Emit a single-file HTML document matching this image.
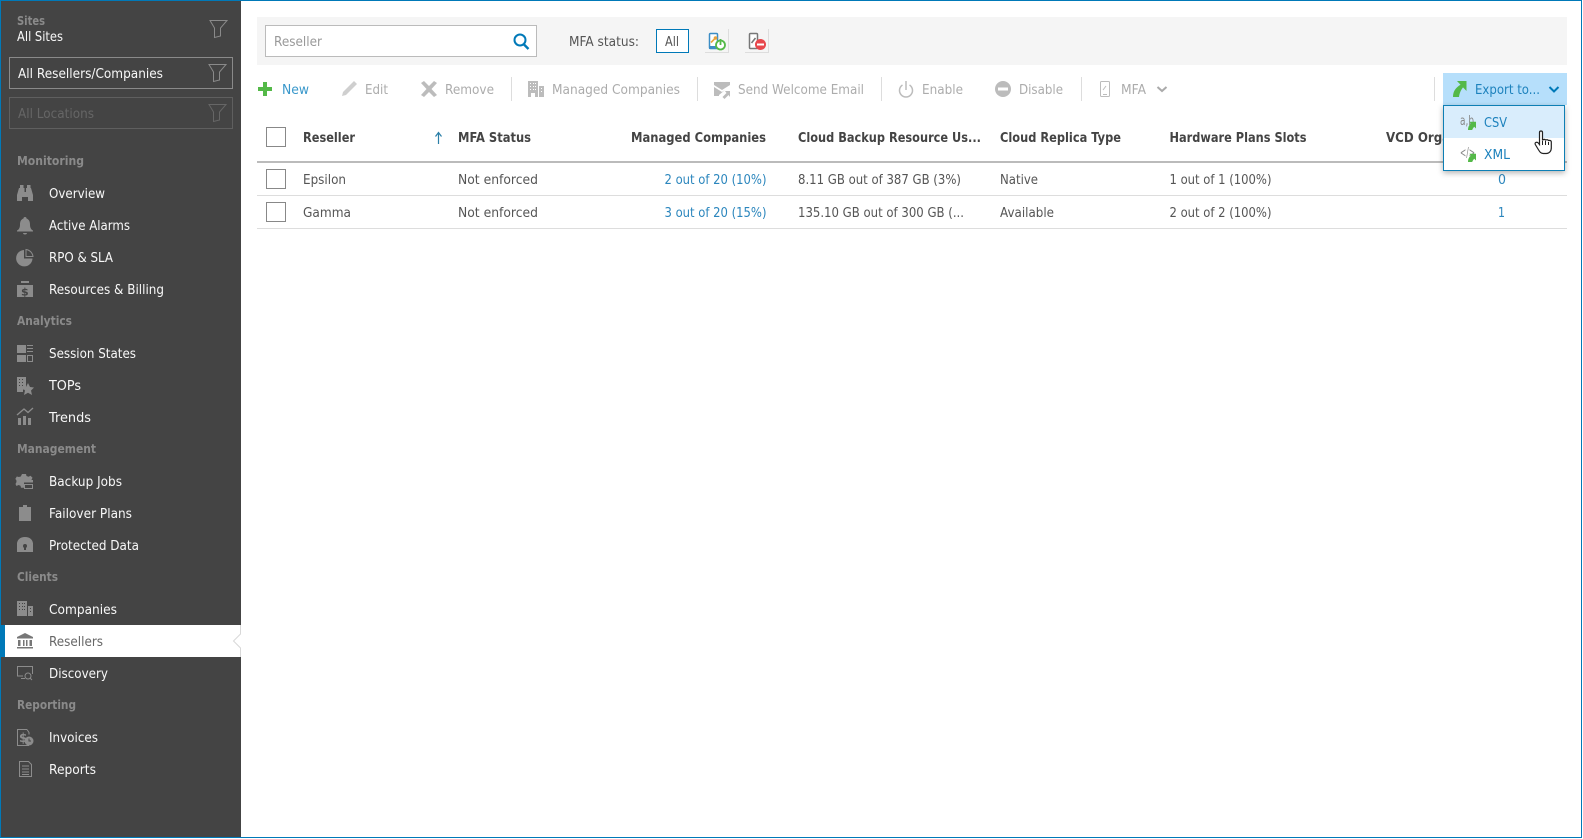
<!DOCTYPE html>
<html><head><meta charset="utf-8"><title>Resellers</title>
<style>
html,body{margin:0;padding:0;background:#fff;overflow:hidden}
svg{display:block}
text{font-family:"DejaVu Sans","Liberation Sans",sans-serif;font-size:13px}
.w{fill:#f8f8f8}
.s{fill:#8a8a8a;font-weight:bold;font-size:12px}
.g{fill:#acacac}
.d{fill:#555}
.h{fill:#444;font-weight:bold;font-size:13px}
.l{fill:#2b86bd}
.i{fill:#8c8c8c}
.ti{fill:#bcbcbc}
</style></head><body>
<svg xmlns="http://www.w3.org/2000/svg" width="1583" height="839" viewBox="0 0 1583 839">
<rect width="1583" height="839" fill="#fff"/>
<!-- sidebar -->
<rect x="0" y="0" width="241" height="838" fill="#444"/>
<rect x="0" y="0" width="1582" height="1" fill="#0079b8"/>
<rect x="0" y="0" width="1" height="838" fill="#0079b8"/>
<rect x="0" y="837" width="1582" height="1" fill="#0079b8"/>
<rect x="1581" y="0" width="1" height="838" fill="#0079b8"/>
<text x="17" y="25" class="s" textLength="28" lengthAdjust="spacingAndGlyphs">Sites</text>
<text x="17" y="41" class="w" textLength="46" lengthAdjust="spacingAndGlyphs">All Sites</text>
<path d="M210 20.500H227L220.500 28V36L214.500 37.500V28Z" fill="none" stroke="#8a8a8a"/>
<rect x="9.500" y="57.500" width="223" height="31" fill="none" stroke="#8a8a8a"/>
<text x="18" y="78" class="w" textLength="145" lengthAdjust="spacingAndGlyphs">All Resellers/Companies</text>
<path d="M209 64.500H226L219.500 72V80L213.500 81.500V72Z" fill="none" stroke="#8a8a8a"/>
<rect x="9.500" y="97.500" width="223" height="31" fill="none" stroke="#5f5f5f"/>
<text x="18" y="118" fill="#666" textLength="76" lengthAdjust="spacingAndGlyphs">All Locations</text>
<path d="M209 104.500H226L219.500 112V120L213.500 121.500V112Z" fill="none" stroke="#666"/>

<text x="17" y="165" class="s" textLength="67" lengthAdjust="spacingAndGlyphs">Monitoring</text>
<text x="49" y="198" class="w" textLength="56" lengthAdjust="spacingAndGlyphs">Overview</text>
<text x="49" y="230" class="w" textLength="81" lengthAdjust="spacingAndGlyphs">Active Alarms</text>
<text x="49" y="262" class="w" textLength="64" lengthAdjust="spacingAndGlyphs">RPO &amp; SLA</text>
<text x="49" y="294" class="w" textLength="115" lengthAdjust="spacingAndGlyphs">Resources &amp; Billing</text>
<text x="17" y="325" class="s" textLength="55" lengthAdjust="spacingAndGlyphs">Analytics</text>
<text x="49" y="358" class="w" textLength="87" lengthAdjust="spacingAndGlyphs">Session States</text>
<text x="49" y="390" class="w" textLength="32" lengthAdjust="spacingAndGlyphs">TOPs</text>
<text x="49" y="422" class="w" textLength="42" lengthAdjust="spacingAndGlyphs">Trends</text>
<text x="17" y="453" class="s" textLength="79" lengthAdjust="spacingAndGlyphs">Management</text>
<text x="49" y="486" class="w" textLength="73" lengthAdjust="spacingAndGlyphs">Backup Jobs</text>
<text x="49" y="518" class="w" textLength="83" lengthAdjust="spacingAndGlyphs">Failover Plans</text>
<text x="49" y="550" class="w" textLength="90" lengthAdjust="spacingAndGlyphs">Protected Data</text>
<text x="17" y="581" class="s" textLength="41" lengthAdjust="spacingAndGlyphs">Clients</text>
<text x="49" y="614" class="w" textLength="68" lengthAdjust="spacingAndGlyphs">Companies</text>
<rect x="1" y="625" width="4" height="32" fill="#0079b8"/>
<rect x="5" y="625" width="236" height="32" fill="#fff"/>
<path d="M240.500 625V634L233.500 641L240.500 648V657" fill="none" stroke="#d8d8d8"/>
<text x="49" y="646" fill="#666" textLength="54" lengthAdjust="spacingAndGlyphs">Resellers</text>
<text x="49" y="678" class="w" textLength="59" lengthAdjust="spacingAndGlyphs">Discovery</text>
<text x="17" y="709" class="s" textLength="59" lengthAdjust="spacingAndGlyphs">Reporting</text>
<text x="49" y="742" class="w" textLength="49" lengthAdjust="spacingAndGlyphs">Invoices</text>
<text x="49" y="774" class="w" textLength="47" lengthAdjust="spacingAndGlyphs">Reports</text>

<!-- sidebar icons -->
<g class="i">
<!-- binoculars -->
<rect x="20" y="185" width="3.500" height="3"/><rect x="27" y="185" width="3.500" height="3"/>
<path d="M19 188h5.500v4h1.500v-4h5l2 7v6h-5v-4h-6v4h-5v-6z"/>
<!-- bell -->
<path d="M25 217c1 0 1.500.5 1.500 1.500 2.500 1 3.500 3 3.500 6 0 3 1 5 3 6v1H17v-1c2-1 3-3 3-6 0-3 1-5 3.500-6 0-1 .5-1.500 1.500-1.500zM23 233h4c0 1-1 1.500-2 1.500s-2-.5-2-1.500z"/>
<!-- pie -->
<path d="M24 250v8.500h8.500a8.200 8.200 0 1 1-8.500-8.500z"/>
<path d="M26 249.500a8 8 0 0 1 7 7h-7z" fill="none" stroke="#8c8c8c"/>
<!-- money -->
<path d="M21 281h8v2h-8zM17 285h16v12H17z"/>
<text x="21" y="295.500" fill="#444" style="font-size:11px;font-weight:bold">$</text>
<!-- session states -->
<rect x="17" y="345" width="9" height="8"/><rect x="17" y="355" width="9" height="7"/>
<path d="M27 345h6v1h-6zM27 348h6v1h-6zM27 351h6v1h-6z"/>
<rect x="27.500" y="355.500" width="5" height="6" fill="none" stroke="#8c8c8c"/>
<!-- tops -->
<path d="M17 377h9v10l-3 3v2h-6z"/>
<path d="M28 383l2 4 4 .5-3 3 1 4.500-4-2.300-4 2.300 1-4.500-3-3 4-.5z"/>
<path d="M19 379h1v1h-1zM22 379h1v1h-1zM19 382h1v1h-1zM22 382h1v1h-1zM19 385h1v1h-1zM22 385h1v1h-1z" fill="#444"/>
<!-- trends -->
<rect x="18" y="418" width="3" height="7"/><rect x="23" y="416" width="3" height="9"/><rect x="28" y="418" width="3" height="7"/>
<path d="M17 415l7-6 4 3.500 5-4.500" fill="none" stroke="#8c8c8c" stroke-width="1.300"/>
<!-- backup jobs -->
<path d="M22 474h4l.5 2 2 .8 2-1 2 2-1 2 .5 1H24v7h-3l-.5-2-2-.8-2 1-1-2 1-2-.2-2-1-1 1.500-2.500 2 .5 2-.5z"/>
<rect x="23" y="480" width="10" height="2.500"/>
<rect x="24.500" y="484.500" width="8" height="4" fill="none" stroke="#8c8c8c"/>
<!-- failover plans clipboard -->
<path d="M23 505h4v2h4v14H19v-14h4z"/>
<!-- protected data lock -->
<path d="M17 552v-8c0-4 3-7 8-7s8 3 8 7v8h-6v-4a2 2 0 1 0-4 0v4z"/>
<rect x="17" y="543" width="16" height="9"/>
<circle cx="25" cy="546" r="2" fill="#444"/><rect x="24" y="547" width="2" height="3" fill="#444"/>
<!-- companies -->
<path d="M17 601h10v15H17zM28 606h5v10h-5z"/>
<path d="M19 603h1v1h-1zM22 603h1v1h-1zM25 603h-1v1h1zM19 606h1v1h-1zM22 606h1v1h-1zM24 606h1v1h-1zM19 609h1v1h-1zM22 609h1v1h-1zM24 609h1v1h-1zM30 608h1v1h-1zM30 611h1v1h-1z" fill="#444"/>
</g>
<!-- resellers bank -->
<g fill="#777">
<path d="M25 633l8 4v1.500H17V637z"/>
<rect x="18" y="640" width="2.500" height="6"/><rect x="23" y="640" width="1.500" height="6"/><rect x="26" y="640" width="1.500" height="6"/><rect x="29.500" y="640" width="2.500" height="6"/>
<rect x="17" y="647" width="16" height="1.500"/>
</g>
<g fill="none" stroke="#8c8c8c">
<!-- discovery -->
<path d="M23 676H17.500V666.500H32.500V674"/>
<path d="M21 678.500H25"/>
<circle cx="28" cy="676" r="3"/><path d="M30 678l2 2"/>
<!-- invoices -->
<path d="M27 729.500H17.500V745.500H29M27 729.500l2 3v2"/>
</g>
<text x="19" y="742" class="i" style="font-size:12px;font-weight:bold">$</text>
<circle cx="29" cy="741" r="4.500" class="i"/><path d="M29 738.500v2.500h2" fill="none" stroke="#444"/>
<path d="M19.500 761.500h9l3 3v12h-12z" fill="none" stroke="#8c8c8c"/>
<path d="M22 766h7M22 769h7M22 772h7M22 774.500h7" stroke="#8c8c8c" fill="none"/>

<!-- top filter panel -->
<rect x="257" y="17" width="1310" height="48" fill="#f5f5f5"/>
<rect x="265.500" y="25.500" width="271" height="31" fill="#fff" stroke="#bbb"/>
<text x="274" y="46" fill="#999" textLength="48" lengthAdjust="spacingAndGlyphs">Reseller</text>
<circle cx="520" cy="40" r="5.500" fill="none" stroke="#0079b8" stroke-width="2"/>
<path d="M524 44.500l4.500 4.500" stroke="#0079b8" stroke-width="2.400" fill="none"/>
<text x="569" y="46" class="d" textLength="70" lengthAdjust="spacingAndGlyphs">MFA status:</text>
<rect x="656.500" y="29.500" width="32" height="23" fill="#fff" stroke="#0079b8"/>
<text x="665" y="46" class="d" textLength="14" lengthAdjust="spacingAndGlyphs">All</text>
<path d="M728.500 29V52.500H705" fill="none" stroke="#ddd"/>
<path d="M768.500 29V52.500H745" fill="none" stroke="#ddd"/>
<rect x="709.500" y="33.500" width="8" height="15" rx="1" fill="#fff" stroke="#3c8dc5" stroke-width="1.500"/>
<rect x="709" y="46" width="9" height="3" fill="#3c8dc5"/>
<path d="M711 42.500l4-4" stroke="#e8a33d" stroke-width="1.600"/><circle cx="715.500" cy="38" r="1.800" fill="#e8a33d"/>
<circle cx="720.500" cy="45" r="4.500" fill="#fff" stroke="#54b948" stroke-width="1.800"/>
<path d="M720.500 39v6" stroke="#54b948" stroke-width="1.800"/>
<rect x="749.500" y="33.500" width="8" height="15" rx="1" fill="#fff" stroke="#777" stroke-width="1.500"/>
<path d="M751.500 43l4-5" stroke="#777" stroke-width="1.600"/>
<circle cx="760.500" cy="44.500" r="5.500" fill="#e8474c"/>
<rect x="757" y="43.500" width="7" height="2" fill="#fff"/>

<!-- toolbar -->
<path d="M263 82h4v5h5v4h-5v5h-4v-5h-5v-4h5z" fill="#54b948"/>
<text x="282" y="94" fill="#3a98cb" textLength="27" lengthAdjust="spacingAndGlyphs">New</text>
<path d="M342 96l1-4 11-11 3 3-11 11z" fill="#cfcfcf"/>
<text x="365" y="94" class="g" textLength="23" lengthAdjust="spacingAndGlyphs">Edit</text>
<path d="M421 83l3-2 5 5 5-5 3 2-5.500 6 5.500 6-3 2-5-5-5 5-3-2 5.500-6z" class="ti"/>
<text x="445" y="94" class="g" textLength="49" lengthAdjust="spacingAndGlyphs">Remove</text>
<rect x="511" y="77" width="1" height="24" fill="#ddd"/>
<path d="M528 81h10v16h-10zM539 86h5v11h-5z" class="ti"/>
<path d="M530 83h1v1h-1zM533 83h1v1h-1zM535 83h1v1h-1zM530 86h1v1h-1zM533 86h1v1h-1zM535 86h1v1h-1zM530 89h1v1h-1zM533 89h1v1h-1zM535 89h1v1h-1zM541 88h1v1h-1zM541 91h1v1h-1zM531 93h4v4h-4z" fill="#fff"/>
<text x="552" y="94" class="g" textLength="128" lengthAdjust="spacingAndGlyphs">Managed Companies</text>
<rect x="697" y="77" width="1" height="24" fill="#ddd"/>
<path d="M714 82h16v3l-8 5-8-5zM714 87l8 5 3-2-6 5v1h-5zM725 91h5v6l-1.500-2-4 4-2-2 4-4z" class="ti"/>
<text x="738" y="94" class="g" textLength="126" lengthAdjust="spacingAndGlyphs">Send Welcome Email</text>
<rect x="881" y="77" width="1" height="24" fill="#ddd"/>
<path d="M902.500 85a6.500 6.500 0 1 0 7 0" fill="none" stroke="#bcbcbc" stroke-width="1.500"/>
<path d="M906 81v9" stroke="#bcbcbc" stroke-width="1.500"/>
<text x="922" y="94" class="g" textLength="41" lengthAdjust="spacingAndGlyphs">Enable</text>
<circle cx="1003" cy="89" r="8" class="ti"/><rect x="998" y="87.500" width="10" height="3" fill="#fff"/>
<text x="1019" y="94" class="g" textLength="44" lengthAdjust="spacingAndGlyphs">Disable</text>
<rect x="1081" y="77" width="1" height="24" fill="#ddd"/>
<rect x="1100.500" y="81.500" width="9" height="15" rx="1" fill="none" stroke="#bcbcbc"/>
<path d="M1103 90l3-4M1103 94.500h4" stroke="#bcbcbc" fill="none"/>
<text x="1121" y="94" class="g" textLength="25" lengthAdjust="spacingAndGlyphs">MFA</text>
<path d="M1157.500 87l4.500 4 4.500-4" fill="none" stroke="#aaa" stroke-width="2"/>
<rect x="1434" y="77" width="1" height="24" fill="#ddd"/>

<!-- table -->
<rect x="266.500" y="127.500" width="19" height="19" fill="#fff" stroke="#888"/>
<text x="303" y="142" class="h" textLength="52" lengthAdjust="spacingAndGlyphs">Reseller</text>
<path d="M438.500 133v11M435.500 136.500l3-4 3 4" fill="none" stroke="#2b7fa8" stroke-width="1.200"/>
<text x="458" y="142" class="h" textLength="73" lengthAdjust="spacingAndGlyphs">MFA Status</text>
<text x="631" y="142" class="h" textLength="135" lengthAdjust="spacingAndGlyphs">Managed Companies</text>
<text x="798" y="142" class="h" textLength="183" lengthAdjust="spacingAndGlyphs">Cloud Backup Resource Us...</text>
<text x="1000" y="142" class="h" textLength="121" lengthAdjust="spacingAndGlyphs">Cloud Replica Type</text>
<text x="1169.500" y="142" class="h" textLength="137" lengthAdjust="spacingAndGlyphs">Hardware Plans Slots</text>
<text x="1386" y="142" class="h" textLength="125" lengthAdjust="spacingAndGlyphs">VCD Organizations</text>
<rect x="257" y="161" width="1310" height="2" fill="#bbb"/>
<rect x="257" y="195" width="1310" height="1" fill="#ddd"/>
<rect x="257" y="228" width="1310" height="1" fill="#ddd"/>
<rect x="266.500" y="169.500" width="19" height="19" fill="#fff" stroke="#888"/>
<rect x="266.500" y="202.500" width="19" height="19" fill="#fff" stroke="#888"/>
<text x="303" y="184" class="d" textLength="43" lengthAdjust="spacingAndGlyphs">Epsilon</text>
<text x="303" y="217" class="d" textLength="48" lengthAdjust="spacingAndGlyphs">Gamma</text>
<text x="458" y="184" class="d" textLength="80" lengthAdjust="spacingAndGlyphs">Not enforced</text>
<text x="458" y="217" class="d" textLength="80" lengthAdjust="spacingAndGlyphs">Not enforced</text>
<text x="664.500" y="184" class="l" textLength="102" lengthAdjust="spacingAndGlyphs">2 out of 20 (10%)</text>
<text x="664.500" y="217" class="l" textLength="102" lengthAdjust="spacingAndGlyphs">3 out of 20 (15%)</text>
<text x="798" y="184" class="d" textLength="163" lengthAdjust="spacingAndGlyphs">8.11 GB out of 387 GB (3%)</text>
<text x="798" y="217" class="d" textLength="166" lengthAdjust="spacingAndGlyphs">135.10 GB out of 300 GB (...</text>
<text x="1000" y="184" class="d" textLength="38" lengthAdjust="spacingAndGlyphs">Native</text>
<text x="1000" y="217" class="d" textLength="54" lengthAdjust="spacingAndGlyphs">Available</text>
<text x="1169.500" y="184" class="d" textLength="102" lengthAdjust="spacingAndGlyphs">1 out of 1 (100%)</text>
<text x="1169.500" y="217" class="d" textLength="102" lengthAdjust="spacingAndGlyphs">2 out of 2 (100%)</text>
<text x="1498" y="184" class="l" textLength="8" lengthAdjust="spacingAndGlyphs">0</text>
<text x="1498" y="217" class="l" textLength="7" lengthAdjust="spacingAndGlyphs">1</text>

<!-- export button + dropdown -->
<defs><filter id="sh" x="-20%" y="-20%" width="140%" height="150%"><feDropShadow dx="0" dy="2" stdDeviation="3" flood-color="#000" flood-opacity=".3"/></filter></defs>
<rect x="1443" y="73" width="124" height="32" fill="#b6dffb"/>
<path d="M1453 97C1453 91 1456 87.500 1460.500 84.800L1457 81H1466.500V91L1463 87.400C1461 90 1459.500 93 1459 97Z" fill="#54b948"/>
<text x="1475" y="94" fill="#1d82bd" textLength="65" lengthAdjust="spacingAndGlyphs">Export to...</text>
<path d="M1549.500 87l4.500 4.500 4.500-4.500" fill="none" stroke="#0079b8" stroke-width="2"/>
<rect x="1443.500" y="105.500" width="121" height="65" fill="#fff" stroke="#0f7fb5" filter="url(#sh)"/>
<rect x="1444" y="106" width="120" height="32" fill="#d9edfc"/>
<text x="1460" y="125" fill="#888" style="font-size:13px" textLength="14" lengthAdjust="spacingAndGlyphs">a,b</text>
<path d="M1468 130c0-3 1-5 3-6.500l-1.800-1.800h6.800v6.800l-1.800-1.800c-1 1.200-1.800 2.500-2 3.300z" fill="#54b948"/>
<text x="1484" y="127" fill="#1d82bd" textLength="23" lengthAdjust="spacingAndGlyphs">CSV</text>
<text x="1460" y="157" fill="#888" style="font-size:13px" textLength="15" lengthAdjust="spacingAndGlyphs">&lt;/&gt;</text>
<path d="M1468 162c0-3 1-5 3-6.500l-1.800-1.800h6.800v6.800l-1.800-1.800c-1 1.200-1.800 2.500-2 3.300z" fill="#54b948"/>
<text x="1484" y="159" fill="#1d82bd" textLength="26" lengthAdjust="spacingAndGlyphs">XML</text>
<!-- hand cursor -->
<path d="M1539.500 132.500c0-2 3-2 3 0v8c.5-1.500 3-1.500 3 0 .5-1.300 3-1 3 .5.500-1 2.800-.8 2.800 1v6c0 3-2 5.500-5 5.500h-3c-2.500 0-3.500-1.500-5-4l-3-5c-1-2 1.500-3 3-1.500l1.200 1.500z" fill="#fff" stroke="#222" stroke-width="1.200"/>
<path d="M1542.500 141v4M1545.500 141v4M1548.500 142v3" stroke="#222" fill="none"/>
</svg>
</body></html>
